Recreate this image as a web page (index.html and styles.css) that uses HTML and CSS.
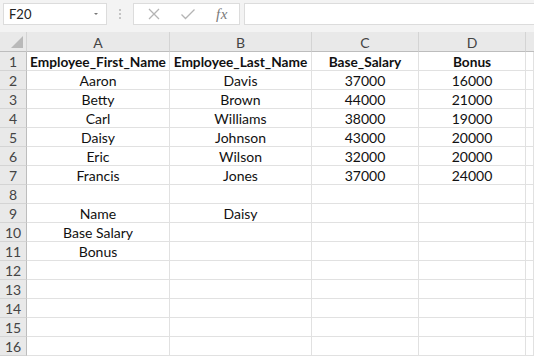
FILE: index.html
```html
<!DOCTYPE html>
<html>
<head>
<meta charset="utf-8">
<link rel="stylesheet" href="styles.css">
</head>
<body>
<div class="app">
  <div class="fbar">
    <div class="namebox"><span class="ref">F20</span><span class="dd"></span></div>
    <div class="grip"><i></i><i></i><i></i></div>
    <div class="fbtns">
      <svg class="ico" width="14" height="14" viewBox="0 0 14 14"><path d="M2 2 L12 12 M12 2 L2 12" stroke="#b4b4b4" stroke-width="1.3" fill="none"/></svg>
      <svg class="ico" width="16" height="14" viewBox="0 0 16 14"><path d="M1.5 7.5 L5.5 11.5 L14.5 2.5" stroke="#b4b4b4" stroke-width="1.3" fill="none"/></svg>
      <span class="fx">fx</span>
    </div>
    <div class="finput"></div>
  </div>
  <div class="sheet">
    <div class="corner"><span class="tri"></span></div>
    <div class="ch">A</div><div class="ch">B</div><div class="ch">C</div><div class="ch">D</div><div class="ch last"></div>

    <div class="rh">1</div><div class="c b">Employee_First_Name</div><div class="c b">Employee_Last_Name</div><div class="c b">Base_Salary</div><div class="c b">Bonus</div><div class="c"></div>
    <div class="rh">2</div><div class="c">Aaron</div><div class="c">Davis</div><div class="c">37000</div><div class="c">16000</div><div class="c"></div>
    <div class="rh">3</div><div class="c">Betty</div><div class="c">Brown</div><div class="c">44000</div><div class="c">21000</div><div class="c"></div>
    <div class="rh">4</div><div class="c">Carl</div><div class="c">Williams</div><div class="c">38000</div><div class="c">19000</div><div class="c"></div>
    <div class="rh">5</div><div class="c">Daisy</div><div class="c">Johnson</div><div class="c">43000</div><div class="c">20000</div><div class="c"></div>
    <div class="rh">6</div><div class="c">Eric</div><div class="c">Wilson</div><div class="c">32000</div><div class="c">20000</div><div class="c"></div>
    <div class="rh">7</div><div class="c">Francis</div><div class="c">Jones</div><div class="c">37000</div><div class="c">24000</div><div class="c"></div>
    <div class="rh">8</div><div class="c"></div><div class="c"></div><div class="c"></div><div class="c"></div><div class="c"></div>
    <div class="rh">9</div><div class="c">Name</div><div class="c">Daisy</div><div class="c"></div><div class="c"></div><div class="c"></div>
    <div class="rh">10</div><div class="c">Base Salary</div><div class="c"></div><div class="c"></div><div class="c"></div><div class="c"></div>
    <div class="rh">11</div><div class="c">Bonus</div><div class="c"></div><div class="c"></div><div class="c"></div><div class="c"></div>
    <div class="rh">12</div><div class="c"></div><div class="c"></div><div class="c"></div><div class="c"></div><div class="c"></div>
    <div class="rh">13</div><div class="c"></div><div class="c"></div><div class="c"></div><div class="c"></div><div class="c"></div>
    <div class="rh">14</div><div class="c"></div><div class="c"></div><div class="c"></div><div class="c"></div><div class="c"></div>
    <div class="rh">15</div><div class="c"></div><div class="c"></div><div class="c"></div><div class="c"></div><div class="c"></div>
    <div class="rh">16</div><div class="c"></div><div class="c"></div><div class="c"></div><div class="c"></div><div class="c"></div>
  </div>
</div>
</body>
</html>
```

FILE: styles.css
```css
* { box-sizing: border-box; }
html, body { margin: 0; padding: 0; }
body {
  width: 534px;
  height: 358px;
  overflow: hidden;
  background: #ffffff;
  font-family: Lato, "Open Sans", sans-serif;
}
.app { width: 534px; height: 358px; display: flex; flex-direction: column; }

.fbar {
  height: 32px;
  background: #f3f3f3;
  display: flex;
  align-items: flex-start;
  padding-top: 3px;
  padding-left: 3px;
  flex-shrink: 0;
}
.namebox {
  width: 104px;
  height: 22px;
  background: #fff;
  border: 1px solid #dcdcdc;
  display: flex;
  align-items: center;
  justify-content: space-between;
  padding: 0 8px 0 5px;
}
.ref { font-size: 13px; color: #222; }
.dd {
  width: 0; height: 0;
  border-left: 2px solid transparent;
  border-right: 2px solid transparent;
  border-top: 2px solid #777;
}
.grip {
  width: 26px;
  height: 22px;
  display: flex;
  flex-direction: column;
  align-items: center;
  justify-content: center;
  gap: 2px;
}
.grip i { display: block; width: 2px; height: 2px; background: #c4c4c4; }
.fbtns {
  width: 107px;
  height: 22px;
  background: #fff;
  border: 1px solid #dcdcdc;
  display: flex;
  align-items: center;
  padding-left: 13px;
}
.fbtns .ico:first-child { margin-right: 19px; }
.fbtns .ico:nth-child(2) { margin-right: 20px; }
.fx {
  font-family: "Liberation Serif", serif;
  font-style: italic;
  font-size: 15px;
  color: #7a7a7a;
  letter-spacing: 0.5px;
}
.finput {
  flex: 1;
  height: 22px;
  margin-left: 4px;
  background: #fff;
  border: 1px solid #dcdcdc;
  border-right: none;
}

.sheet {
  display: grid;
  grid-template-columns: 27px 143px 142px 107px 107px 1fr;
  grid-template-rows: 20px repeat(16, 19px);
  flex: 1;
}
.corner {
  background: #e9e9e9;
  border-right: 1px solid #d4d4d4;
  border-bottom: 1px solid #bdbdbd;
  position: relative;
}
.tri {
  position: absolute;
  right: 3px;
  bottom: 3px;
  width: 12px;
  height: 12px;
  background: #b9b9b9;
  clip-path: polygon(100% 0, 100% 100%, 0 100%);
}
.ch {
  background: #e9e9e9;
  border-right: 1px solid #d4d4d4;
  border-bottom: 1px solid #bdbdbd;
  font-size: 14px;
  color: #444;
  display: flex;
  align-items: center;
  justify-content: center;
  padding-top: 1px;
}
.ch.last { border-right: none; }
.rh {
  background: #e9e9e9;
  border-right: 1px solid #bdbdbd;
  border-bottom: 1px solid #d4d4d4;
  font-size: 14px;
  color: #444;
  display: flex;
  align-items: center;
  justify-content: center;
}
.c {
  border-right: 1px solid #e1e1e1;
  border-bottom: 1px solid #e1e1e1;
  font-size: 14px;
  color: #111;
  display: flex;
  align-items: center;
  justify-content: center;
  white-space: nowrap;
  overflow: visible;
}
.c.b { font-weight: 700; font-size: 13.7px; }
```
